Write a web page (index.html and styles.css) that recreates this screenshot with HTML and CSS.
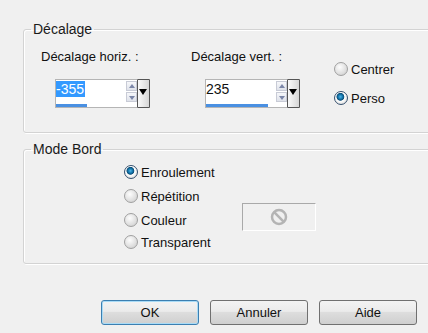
FILE: index.html
```html
<!DOCTYPE html>
<html lang="fr">
<head>
    <meta charset="UTF-8">
    <title>Décalage</title>
    <link rel="stylesheet" href="styles.css">
</head>
<body>
    <fieldset class="group offset">
        <legend>Décalage</legend>
        <div class="offset-row">
            <div class="field">
                <div class="label">Décalage horiz. :</div>
                <div class="spin">
                    <div class="spin-text"><span class="sel">-355</span></div>
                    <div class="spin-bar" style="width: 31px"></div>
                    <div class="arrows">
                        <span class="arrow up"></span>
                        <span class="arrow down"></span>
                    </div>
                    <div class="drop"><span class="tri"></span></div>
                </div>
            </div>
            <div class="field second">
                <div class="label">Décalage vert. :</div>
                <div class="spin">
                    <div class="spin-text">235</div>
                    <div class="spin-bar" style="width: 62px"></div>
                    <div class="arrows">
                        <span class="arrow up"></span>
                        <span class="arrow down"></span>
                    </div>
                    <div class="drop"><span class="tri"></span></div>
                </div>
            </div>
            <div class="choices">
                <div class="radio"><span class="dot"></span>Centrer</div>
                <div class="radio"><span class="dot on"></span>Perso</div>
            </div>
        </div>
    </fieldset>

    <fieldset class="group border-mode">
        <legend>Mode Bord</legend>
        <div class="mode-row">
            <div class="mode-list">
                <div class="radio"><span class="dot on"></span>Enroulement</div>
                <div class="radio"><span class="dot"></span>Répétition</div>
                <div class="radio"><span class="dot"></span>Couleur</div>
                <div class="radio"><span class="dot"></span>Transparent</div>
            </div>
            <div class="swatch">
                <svg width="18" height="18" viewBox="0 0 18 18">
                    <circle cx="9" cy="9" r="7" fill="none" stroke="#b4b4b4" stroke-width="2.5"/>
                    <line x1="4.2" y1="4.2" x2="13.8" y2="13.8" stroke="#b4b4b4" stroke-width="2.5"/>
                </svg>
            </div>
        </div>
    </fieldset>

    <div class="buttons">
        <button class="btn default">OK</button>
        <button class="btn">Annuler</button>
        <button class="btn">Aide</button>
    </div>
</body>
</html>
```

FILE: styles.css
```css
body { margin: 0; padding-top: 21px; background: #f0f0f0; font-family: "Liberation Sans", Arial, sans-serif; font-size: 13px; color: #111; overflow: hidden; }
.group { margin: 0 -8px 0 23px; padding: 0; border: 1px solid #d3d3d3; border-radius: 3px; box-shadow: inset 1px 1px #fff, 1px 1px #fff; min-width: 0; }
.group legend { margin-left: 7px; padding: 0 2px; font-size: 14px; font-weight: normal; line-height: 16px; color: #1a1a1a; }
.offset { height: 110px; }
.offset-row { display: flex; padding: 12px 0 0 17px; }
.field { width: 150px; }
.field.second { width: 143px; }
.label { line-height: 16px; }
.spin { position: relative; margin: 14px 0 0 14px; width: 93px; height: 27px; border: 1px solid #b5b5b5; background: #fff; }
.spin-text { padding: 1px 0 0 0; font-size: 14px; line-height: 16px; }
.sel { background: #3399ff; color: #fff; padding-right: 1px; }
.spin-bar { position: absolute; left: 0; bottom: 0; height: 3px; background: #4a90e2; }
.arrows { position: absolute; right: 12px; top: 1px; display: flex; flex-direction: column; gap: 1px; }
.arrow { width: 11px; height: 10px; border: 1px solid #c8cbd6; background: linear-gradient(#f6f7fa, #dfe2ea); box-sizing: border-box; position: relative; }
.arrow::after { content: ""; position: absolute; left: 2px; border-left: 3px solid transparent; border-right: 3px solid transparent; }
.arrow.up::after { top: 2px; border-bottom: 4px solid #7b86a8; }
.arrow.down::after { top: 3px; border-top: 4px solid #7b86a8; }
.drop { position: absolute; right: -1px; top: -1px; width: 11px; height: 27px; border: 1px solid #555; border-radius: 1px; background: linear-gradient(90deg, #fafafa, #d6d6d6); }
.tri { position: absolute; left: 1px; top: 9px; border-left: 4.5px solid transparent; border-right: 4.5px solid transparent; border-top: 6px solid #000; }
.choices { padding-top: 12px; display: flex; flex-direction: column; gap: 13px; }
.radio { display: flex; align-items: center; height: 16px; }
.dot { width: 12px; height: 12px; margin-right: 3px; border-radius: 50%; border: 1px solid #a0a0a0; background: radial-gradient(circle at 40% 35%, #fdfdfd, #dcdcdc 65%, #c4c4c4); }
.dot.on { border-color: #35506e; background: radial-gradient(circle at 45% 40%, #4fb4e6 0, #1479b0 22%, #0d4f78 36%, #ffffff 44%, #e8e8e8 68%, #b8b8b8 100%); }
.border-mode { margin-top: 8px; height: 121px; }
.mode-row { display: flex; padding: 3px 0 0 100px; }
.mode-list { width: 118px; display: flex; flex-direction: column; }
.mode-list .radio { height: 24px; }
.mode-list .radio:last-child { margin-top: -2px; }
.swatch { margin-top: 43px; width: 72px; height: 26px; border: 1px solid #a9a9a9; border-right-color: #fff; border-bottom-color: #fff; display: flex; align-items: center; justify-content: center; }
.buttons { display: flex; gap: 11px; padding: 36px 0 0 101px; }
.btn { width: 98px; height: 25px; font-family: inherit; font-size: 13px; color: #111; border: 1px solid #707070; border-radius: 3px; background: linear-gradient(#f3f3f3 0, #ebebeb 45%, #dddddd 50%, #cfcfcf 100%); }
.btn.default { border-color: #3c7fb1; box-shadow: inset 0 0 0 1px #a9dbf6; }
```
